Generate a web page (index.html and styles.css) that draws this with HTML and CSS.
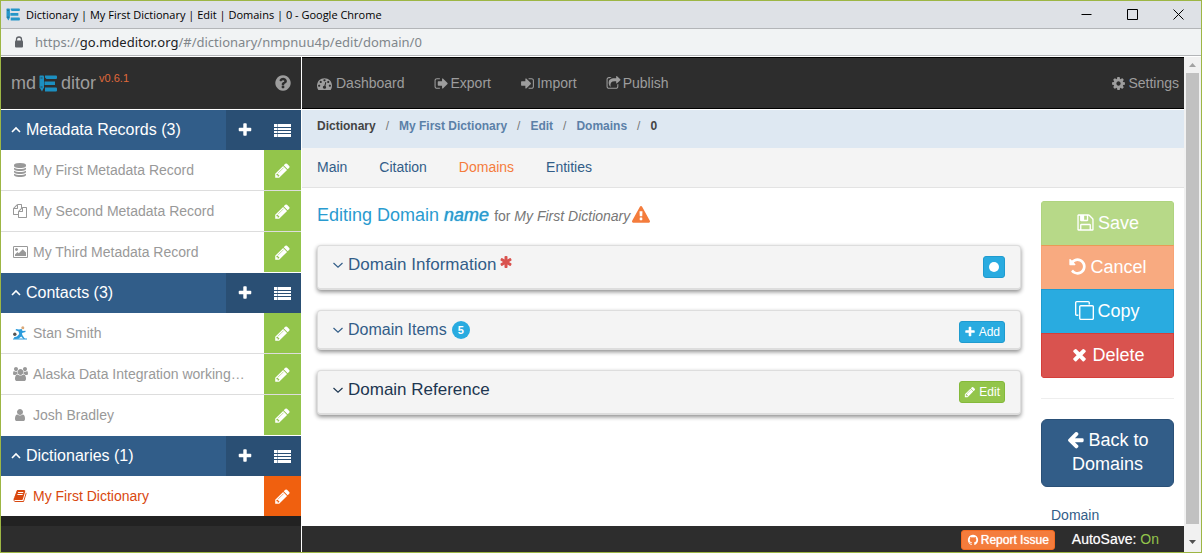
FILE: index.html
```html
<!DOCTYPE html>
<html lang="en">
<head>
<meta charset="utf-8">
<title>Dictionary | My First Dictionary | Edit | Domains | 0</title>
<link rel="stylesheet" href="styles.css">
</head>
<body>
<svg class="sprite" aria-hidden="true">
  <symbol id="plus" viewBox="0 0 1792 1792"><path d="M1600 736v192q0 40-28 68t-68 28h-416v416q0 40-28 68t-68 28h-192q-40 0-68-28t-28-68v-416h-416q-40 0-68-28t-28-68v-192q0-40 28-68t68-28h416v-416q0-40 28-68t68-28h192q40 0 68 28t28 68v416h416q40 0 68 28t28 68z"/></symbol>
  <symbol id="pencil" viewBox="0 0 1792 1792"><path d="M491 1536l91-91-235-235-91 91v107h128v128h107zm523-928q0-22-22-22-10 0-17 7l-542 542q-7 7-7 17 0 22 22 22 10 0 17-7l542-542q7-7 7-17zm-54-192l416 416-832 832h-416v-416zm683 96q0 53-37 90l-166 166-416-416 166-165q36-38 90-38 53 0 91 38l235 234q37 39 37 91z"/></symbol>
  <symbol id="database" viewBox="0 0 1792 1792"><path d="M896 768q237 0 443-43t325-127v170q0 69-103 128t-280 93.500-385 34.500-385-34.500-280-93.500-103-128v-170q119 84 325 127t443 43zm0 768q237 0 443-43t325-127v170q0 69-103 128t-280 93.500-385 34.500-385-34.500-280-93.500-103-128v-170q119 84 325 127t443 43zm0-384q237 0 443-43t325-127v170q0 69-103 128t-280 93.500-385 34.500-385-34.500-280-93.500-103-128v-170q119 84 325 127t443 43zm0-1152q208 0 385 34.500t280 93.500 103 128v128q0 69-103 128t-280 93.500-385 34.500-385-34.500-280-93.500-103-128v-128q0-69 103-128t280-93.500 385-34.500z"/></symbol>
  <symbol id="files" viewBox="0 0 1792 1792"><path d="M1696 384q40 0 68 28t28 68v1216q0 40-28 68t-68 28h-960q-40 0-68-28t-28-68v-288h-544q-40 0-68-28t-28-68v-672q0-40 20-88t48-76l408-408q28-28 76-48t88-20h416q40 0 68 28t28 68v328q68-40 128-40h416zm-544 213l-299 299h299v-299zm-640-384l-299 299h299v-299zm196 647l316-316v-416h-384v416q0 40-28 68t-68 28h-416v640h512v-256q0-40 20-88t48-76zm956 804v-1152h-384v416q0 40-28 68t-68 28h-416v640h896z"/></symbol>
  <symbol id="picture" viewBox="-64 0 1920 1792"><path d="M576 576q0 80-56 136t-136 56-136-56-56-136 56-136 136-56 136 56 56 136zm1024 384v448h-1408v-192l320-320 160 160 512-512zm96-704h-1600q-13 0-22.500 9.500t-9.500 22.500v1216q0 13 9.500 22.500t22.500 9.500h1600q13 0 22.500-9.500t9.500-22.500v-1216q0-13-9.500-22.500t-22.500-9.500zm160 32v1216q0 66-47 113t-113 47h-1600q-66 0-113-47t-47-113v-1216q0-66 47-113t113-47h1600q66 0 113 47t47 113z"/></symbol>
  <symbol id="question" viewBox="0 0 1792 1792"><path d="M1024 1376v-192q0-14-9-23t-23-9h-192q-14 0-23 9t-9 23v192q0 14 9 23t23 9h192q14 0 23-9t9-23zm256-672q0-88-55.500-163t-138.500-116-170-41q-243 0-371 213-15 24 8 42l132 100q7 6 19 6 16 0 25-12 53-68 86-92 34-24 86-24 48 0 85.500 26t37.500 59q0 38-20 61t-68 45q-63 28-115.500 86.500t-52.500 125.500v36q0 14 9 23t23 9h192q14 0 23-9t9-23q0-19 21.500-49.500t54.500-49.500q32-18 49-28.500t46-35 44.500-48 28-60.500 12.500-81zm384 192q0 209-103 385.500t-279.500 279.500-385.500 103-385.500-103-279.500-279.500-103-385.500 103-385.500 279.500-279.500 385.500-103 385.500 103 279.500 279.500 103 385.500z"/></symbol>
  <symbol id="user" viewBox="0 0 1792 1792"><path d="M1536 1399q0 109-62.500 187t-150.500 78h-854q-88 0-150.500-78t-62.500-187q0-85 8.500-160.500t31.500-152 58.500-131 94-89 134.500-34.500q131 128 313 128t313-128q76 0 134.500 34.500t94 89 58.500 131 31.500 152 8.500 160.500zm-256-887q0 159-112.500 271.500t-271.500 112.500-271.500-112.500-112.500-271.500 112.500-271.500 271.500-112.500 271.500 112.500 112.500 271.500z"/></symbol>
  <symbol id="users" viewBox="0 0 1920 1792"><path d="M593 896q-162 5-265 128h-134q-82 0-138-40.500t-56-118.500q0-353 124-353 6 0 43.500 21t97.500 42.500 119 21.500q67 0 133-23-5 37-5 66 0 159 81 256zm1071 637q0 120-73 189.500t-194 69.500h-874q-121 0-194-69.500t-73-189.500q0-53 3.500-103.500t14-109 26.500-108.500 43-97.500 62-81 85.500-53.500 111.500-20q10 0 43 21.500t73 48 107 48 135 21.500 135-21.500 107-48 73-48 43-21.500q61 0 111.500 20t85.500 53.500 62 81 43 97.500 26.500 108.500 14 109 3.500 103.500zm-1024-1277q0 106-75 181t-181 75-181-75-75-181 75-181 181-75 181 75 75 181zm704 384q0 159-112.500 271.500t-271.500 112.500-271.500-112.500-112.500-271.500 112.500-271.500 271.500-112.500 271.500 112.500 112.500 271.500zm576 225q0 78-56 118.500t-138 40.500h-134q-103-123-265-128 81-97 81-256 0-29-5-66 66 23 133 23 59 0 119-21.500t97.500-42.500 43.500-21q124 0 124 353zm-128-609q0 106-75 181t-181 75-181-75-75-181 75-181 181-75 181 75 75 181z"/></symbol>
  <symbol id="gauge" viewBox="0 0 1792 1792"><path d="M384 1152q0-53-37.500-90.500t-90.500-37.500-90.500 37.500-37.500 90.500 37.500 90.500 90.500 37.500 90.500-37.500 37.500-90.500zm192-448q0-53-37.500-90.500t-90.500-37.500-90.500 37.500-37.500 90.500 37.500 90.500 90.500 37.500 90.500-37.500 37.500-90.500zm428 481l101-382q6-26-7.500-48.500t-38.500-29.500-48 6.500-30 39.500l-101 382q-60 5-107 43.500t-63 98.500q-20 77 20 146t117 89 146-20 89-117q16-60-6-117t-72-91zm660-33q0-53-37.500-90.500t-90.500-37.500-90.500 37.500-37.500 90.500 37.500 90.500 90.500 37.500 90.500-37.500 37.500-90.500zm-640-640q0-53-37.500-90.500t-90.500-37.500-90.500 37.500-37.500 90.500 37.500 90.500 90.500 37.500 90.500-37.500 37.500-90.500zm448 192q0-53-37.500-90.500t-90.500-37.500-90.500 37.500-37.500 90.500 37.500 90.500 90.500 37.500 90.500-37.500 37.500-90.500zm320 448q0 261-141 483-19 29-54 29h-1402q-35 0-54-29-141-221-141-483 0-182 71-348t191-286 286-191 348-71 348 71 286 191 191 286 71 348z"/></symbol>
  <symbol id="sign-out" viewBox="0 0 1792 1792"><path d="M704 1440q0 4 1 20t.5 26.500-3 23.500-10 19.500-20.500 6.500h-320q-119 0-203.500-84.500t-84.500-203.500v-704q0-119 84.500-203.500t203.500-84.500h320q13 0 22.500 9.500t9.500 22.500q0 4 1 20t.5 26.500-3 23.500-10 19.500-20.500 6.500h-320q-66 0-113 47t-47 113v704q0 66 47 113t113 47h312l11.500 1 11.500 3 8 5.500 7 9 2 13.500zm928-544q0 26-19 45l-544 544q-19 19-45 19t-45-19-19-45v-288h-448q-26 0-45-19t-19-45v-384q0-26 19-45t45-19h448v-288q0-26 19-45t45-19 45 19l544 544q19 19 19 45z"/></symbol>
  <symbol id="sign-in" viewBox="0 0 1792 1792"><path d="M1312 896q0 26-19 45l-544 544q-19 19-45 19t-45-19-19-45v-288h-448q-26 0-45-19t-19-45v-384q0-26 19-45t45-19h448v-288q0-26 19-45t45-19 45 19l544 544q19 19 19 45zm352-352v704q0 119-84.500 203.500t-203.500 84.500h-320q-13 0-22.500-9.500t-9.500-22.500q0-4-1-20t-.5-26.500 3-23.500 10-19.500 20.500-6.500h320q66 0 113-47t47-113v-704q0-66-47-113t-113-47h-312l-11.500-1-11.500-3-8-5.500-7-9-2-13.500q0-4-1-20t-.5-26.500 3-23.500 10-19.500 20.500-6.500h320q119 0 203.500 84.500t84.500 203.500z"/></symbol>
  <symbol id="share" viewBox="0 0 1792 1792"><path d="M1472 989v259q0 119-84.500 203.500t-203.500 84.500h-832q-119 0-203.500-84.500t-84.500-203.500v-832q0-119 84.500-203.500t203.500-84.500h255q13 0 22.500 9.500t9.500 22.500q0 27-26 32-77 26-133 60-10 4-16 4h-112q-66 0-113 47t-47 113v832q0 66 47 113t113 47h832q66 0 113-47t47-113v-214q0-19 18-29 28-13 54-37 16-16 35-8 21 9 21 29zm237-496l-384 384q-18 19-45 19-12 0-25-5-39-17-39-59v-192h-160q-323 0-438 131-119 137-74 473 3 23-20 34-8 2-12 2-16 0-26-13-10-14-21-31t-39.500-68.500-49.500-99.500-38.500-114-17.500-122q0-49 3.500-91t14-90 28-88 47-81.500 68.500-74 94.500-61.500 124.500-48.500 159.500-30.500 196.500-11h160v-192q0-42 39-59 13-5 25-5 26 0 45 19l384 384q19 19 19 45t-19 45z"/></symbol>
  <symbol id="cog" viewBox="0 0 1792 1792"><path d="M1152 896q0-106-75-181t-181-75-181 75-75 181 75 181 181 75 181-75 75-181zm512-109v222q0 12-8 23t-20 13l-185 28q-19 54-39 91 35 50 107 138 10 12 10 25t-9 23q-27 37-99 108t-94 71q-12 0-26-9l-138-108q-44 23-91 38-16 136-29 186-7 28-36 28h-222q-14 0-24.500-8.500t-11.500-21.500l-28-184q-49-16-90-37l-141 107q-10 9-25 9-14 0-25-11-126-114-165-168-7-10-7-23 0-12 8-23 15-21 51-66.500t54-70.500q-27-50-41-99l-183-27q-13-2-21-12.500t-8-23.500v-222q0-12 8-23t19-13l186-28q14-46 39-92-40-57-107-138-10-12-10-24 0-10 9-23 26-36 98.500-107.500t94.500-71.500q13 0 26 10l138 107q44-23 91-38 16-136 29-186 7-28 36-28h222q14 0 24.500 8.500t11.500 21.500l28 184q49 16 90 37l142-107q9-9 24-9 13 0 25 10 129 119 165 170 7 8 7 22 0 12-8 23-15 21-51 66.500t-54 70.500q26 50 41 98l183 28q13 2 21 12.500t8 23.500z"/></symbol>
  <symbol id="asterisk" viewBox="0 0 1792 1792"><path d="M1546 1050q46 26 59.500 77.500t-12.500 97.500l-64 110q-26 46-77.500 59.500t-97.500-12.500l-266-153v307q0 52-38 90t-90 38h-128q-52 0-90-38t-38-90v-307l-266 153q-46 26-97.500 12.500t-77.500-59.500l-64-110q-26-46-12.500-97.500t59.500-77.500l266-154-266-154q-46-26-59.500-77.500t12.500-97.500l64-110q26-46 77.500-59.500t97.500 12.500l266 153v-307q0-52 38-90t90-38h128q52 0 90 38t38 90v307l266-153q46-26 97.500-12.500t77.500 59.500l64 110q26 46 12.500 97.500t-59.500 77.500l-266 154z"/></symbol>
  <symbol id="warning" viewBox="0 0 1792 1792"><path d="M1024 1375v-190q0-14-9.500-23.500t-22.500-9.500h-192q-13 0-22.500 9.500t-9.500 23.500v190q0 14 9.500 23.500t22.500 9.500h192q13 0 22.500-9.500t9.500-23.500zm-2-374l18-459q0-12-10-19-13-11-24-11h-220q-11 0-24 11-10 7-10 21l17 457q0 10 10 16.500t24 6.500h185q14 0 23.500-6.500t10.500-16.500zm-14-934l768 1408q35 63-2 126-17 29-46.500 46t-63.500 17h-1536q-34 0-63.500-17t-46.500-46q-37-63-2-126l768-1408q17-31 47-49t65-18 65 18 47 49z"/></symbol>
  <symbol id="floppy" viewBox="0 0 1792 1792"><path d="M512 1536h768v-384h-768v384zm896 0h128v-896q0-14-10-38.500t-20-34.500l-281-281q-10-10-34-20t-39-10v416q0 40-28 68t-68 28h-576q-40 0-68-28t-28-68v-416h-128v1280h128v-416q0-40 28-68t68-28h832q40 0 68 28t28 68v416zm-384-928v-320q0-13-9.500-22.500t-22.500-9.500h-192q-13 0-22.500 9.500t-9.500 22.500v320q0 13 9.500 22.500t22.500 9.500h192q13 0 22.500-9.500t9.500-22.500zm640 32v928q0 40-28 68t-68 28h-1344q-40 0-68-28t-28-68v-1344q0-40 28-68t68-28h928q40 0 88 20t76 48l280 280q28 28 48 76t20 88z"/></symbol>
  <symbol id="undo" viewBox="0 0 1792 1792"><path d="M1664 896q0 156-61 298t-164 245-245 164-298 61q-172 0-327-72.500t-264-204.500q-7-10-6.500-22.500t8.500-20.500l137-138q10-9 25-9 16 2 23 12 73 95 179 147t225 52q104 0 198.500-40.500t163.500-109.500 109.500-163.500 40.500-198.500-40.500-198.500-109.500-163.500-163.500-109.500-198.500-40.500q-98 0-188 35.500t-160 101.500l137 138q31 30 14 69-17 40-59 40h-448q-26 0-45-19t-19-45v-448q0-42 40-59 39-17 69 14l130 129q107-101 244.500-156.500t284.500-55.500q156 0 298 61t245 164 164 245 61 298z"/></symbol>
  <symbol id="clone" viewBox="0 0 1792 1792"><path d="M1664 1632v-1088q0-13-9.500-22.500t-22.500-9.500h-1088q-13 0-22.500 9.500t-9.500 22.500v1088q0 13 9.500 22.500t22.500 9.500h1088q13 0 22.500-9.500t9.500-22.500zm128-1088v1088q0 66-47 113t-113 47h-1088q-66 0-113-47t-47-113v-1088q0-66 47-113t113-47h1088q66 0 113 47t47 113zm-384-384v160h-128v-160q0-13-9.500-22.500t-22.500-9.500h-1088q-13 0-22.500 9.500t-9.500 22.500v1088q0 13 9.500 22.500t22.500 9.500h160v128h-160q-66 0-113-47t-47-113v-1088q0-66 47-113t113-47h1088q66 0 113 47t47 113z"/></symbol>
  <symbol id="times" viewBox="0 0 1792 1792"><path d="M1490 1322q0 40-28 68l-136 136q-28 28-68 28t-68-28l-294-294-294 294q-28 28-68 28t-68-28l-136-136q-28-28-28-68t28-68l294-294-294-294q-28-28-28-68t28-68l136-136q28-28 68-28t68 28l294 294 294-294q28-28 68-28t68 28l136 136q28 28 28 68t-28 68l-294 294 294 294q28 28 28 68z"/></symbol>
  <symbol id="arrow-left" viewBox="0 0 1792 1792"><path d="M1664 896v128q0 53-32.500 90.500t-84.500 37.500h-704l293 294q38 36 38 90t-38 90l-75 76q-37 37-90 37-52 0-91-37l-651-652q-37-37-37-90 0-52 37-91l651-650q38-38 91-38 52 0 90 38l75 74q38 38 38 91t-38 91l-293 293h704q52 0 84.500 37.500t32.500 90.500z"/></symbol>
  <symbol id="github" viewBox="0 0 1792 1792"><path d="M896 128q209 0 385.500 103t279.500 279.500 103 385.500q0 251-146.500 451.500t-378.500 277.500q-27 5-40-7t-13-30q0-3 .5-76.500t.5-134.500q0-97-52-142 57-6 102.500-18t94-39 81-66.500 53-105 20.500-150.500q0-119-79-206 37-91-8-204-28-9-81 11t-92 44l-38 24q-93-26-192-26t-192 26q-16-11-42.500-27t-83.500-38.500-85-13.500q-45 113-8 204-79 87-79 206 0 85 20.500 150t52.500 105 80.500 67 94 39 102.500 18q-39 36-49 103-21 10-45 15t-57 5-65.500-21.500-55.500-62.500q-19-32-48.500-52t-49.500-24l-20-3q-21 0-29 4.500t-5 11.500 9 14 13 12l7 5q22 10 43.500 38t31.500 51l10 23q13 38 44 61.500t67 30 69.500 7 55.500-3.500l23-4q0 38 .5 88.500t.5 54.500q0 18-13 30t-40 7q-232-77-378.500-277.500t-146.500-451.500q0-209 103-385.500t279.500-279.500 385.500-103z"/></symbol>
  <symbol id="book" viewBox="0 0 1792 1792"><path d="M1703 478q40 57 18 129l-275 906q-19 64-76.500 107.500t-122.500 43.500h-923q-77 0-148.500-53.500t-99.500-131.500q-24-67-2-127 0-4 3-27t4-37q1-8-3-21.500t-3-19.500q2-11 8-21t16.500-23.500 16.500-23.500q23-38 45-91.500t30-91.500q3-10 .5-30t-.5-28q3-11 17-28t17-23q21-36 42-92t25-90q1-9-2.500-32t.5-28q4-13 22-30.500t22-22.500q19-26 42.500-84.500t27.500-96.500q1-8-3-25.500t-2-26.500q2-8 9-18t18-23 17-21q8-12 16.500-30.500t15-35 16-36 19.500-32 26.500-23.500 36-11.500 47.500 5.500l-1 3q38-9 51-9h761q74 0 114 56t18 130l-274 906q-36 119-71.500 153.500t-128.500 34.500h-869q-27 0-38 15-11 16-1 43 24 70 144 70h923q29 0 56-15.500t35-41.500l300-987q7-22 5-57 38 15 59 43zm-1064 2q-4 13 2 22.500t20 9.500h608q13 0 25.500-9.500t16.500-22.500l21-64q4-13-2-22.500t-20-9.500h-608q-13 0-25.500 9.500t-16.500 22.500zm-83 256q-4 13 2 22.500t20 9.500h608q13 0 25.500-9.500t16.500-22.500l21-64q4-13-2-22.500t-20-9.500h-608q-13 0-25.500 9.500t-16.500 22.500z"/></symbol>
  <symbol id="list" viewBox="0 0 17 13"><path d="M0 0h3v3H0zM3.500 0H17v3H3.500zM0 4h3v2H0zM3.500 4H17v2H3.500zM0 7h3v2H0zM3.500 7H17v2H3.500zM0 10h3v3H0zM3.500 10H17v3H3.500z"/></symbol>
  <symbol id="chevron-up" viewBox="0 0 10 10"><path d="M1 7l4-4 4 4" fill="none" stroke="currentColor" stroke-width="1.600"/></symbol>
  <symbol id="chevron-down" viewBox="0 0 10 10"><path d="M0.500 3l4.500 4.200 4.500-4.200" fill="none" stroke="currentColor" stroke-width="1.200"/></symbol>
  <symbol id="logo" viewBox="0 0 18 17"><path d="M1 .5h3q1 0 1 1v11l-2 4-2.500-4V1.500q0-1 .5-1z"/><path d="M6 .5h11q1 0 1 1v1.500q0 1-1 1H7.500L6 2.500zM5.500 6.500h10.500v3.500H5.500zM6 12.500h11q1 0 1 1v2q0 1-1 1H6z"/><path d="M1.500 3h2M1.500 12h2" stroke="#2d2d2d" stroke-width=".7"/></symbol>
  <symbol id="runner" viewBox="0 0 14 14"><path d="M6 3.500L3 3l-.4 1.300 3 1.300.6 2.400-2.200 2.500-3 .8.200 1.700 4.200-.2 2.800-2.300 2.300 2.500h1.500l-2.700-4-.3-2 3.500-.9V4.800L9.500 5 8.700 3z" fill="#2a9bdc"/><path d="M0 12.500h14v1H0z" fill="#2a9bdc"/><circle cx="9.800" cy="1.800" r="1.500" fill="#d9a878"/><circle cx="1.800" cy="8.300" r="1.700" fill="#555"/></symbol>
</svg>

<div class="window">
  <header class="titlebar">
    <svg class="favicon"><use href="#logo"/></svg>
    <span class="titlebar-text">Dictionary | My First Dictionary | Edit | Domains | 0 - Google Chrome</span>
    <div class="window-controls">
      <button type="button" aria-label="Minimize"><svg viewBox="0 0 11 11"><path d="M.5 5.500h10"/></svg></button>
      <button type="button" aria-label="Maximize"><svg viewBox="0 0 11 11"><path d="M.5.500h10v10H.5z"/></svg></button>
      <button type="button" aria-label="Close"><svg viewBox="0 0 11 11"><path d="M.5.500l10 10M10.500.500l-10 10"/></svg></button>
    </div>
  </header>
  <div class="addressbar">
    <svg class="lock" viewBox="0 0 10 12"><path d="M2.500 5V3.500a2.500 2.500 0 0 1 5 0V5" fill="none" stroke="#5f6368" stroke-width="1.300"/><rect x="1" y="4.500" width="8" height="7" rx="1" fill="#5f6368"/></svg>
    <span>https://<b>go.mdeditor.org</b>/#/dictionary/nmpnuu4p/edit/domain/0</span>
  </div>

  <div class="app">
    <aside class="sidebar">
      <div class="brand">
        <span>md</span><svg class="brand-logo"><use href="#logo"/></svg><span>ditor</span><sup>v0.6.1</sup>
        <button type="button" class="help" aria-label="Help"><svg><use href="#question"/></svg></button>
      </div>
      <section>
        <div class="group-head">
          <h2><svg><use href="#chevron-up"/></svg>Metadata Records (3)</h2>
          <button type="button" aria-label="Add record"><svg><use href="#plus"/></svg></button>
          <button type="button" aria-label="List records"><svg><use href="#list"/></svg></button>
        </div>
        <ul>
          <li><a href="#"><svg><use href="#database"/></svg><span>My First Metadata Record</span></a><button type="button" aria-label="Edit"><svg><use href="#pencil"/></svg></button></li>
          <li><a href="#"><svg><use href="#files"/></svg><span>My Second Metadata Record</span></a><button type="button" aria-label="Edit"><svg><use href="#pencil"/></svg></button></li>
          <li><a href="#"><svg class="wide"><use href="#picture"/></svg><span>My Third Metadata Record</span></a><button type="button" aria-label="Edit"><svg><use href="#pencil"/></svg></button></li>
        </ul>
      </section>
      <section>
        <div class="group-head">
          <h2><svg><use href="#chevron-up"/></svg>Contacts (3)</h2>
          <button type="button" aria-label="Add contact"><svg><use href="#plus"/></svg></button>
          <button type="button" aria-label="List contacts"><svg><use href="#list"/></svg></button>
        </div>
        <ul>
          <li><a href="#"><svg><use href="#runner"/></svg><span>Stan Smith</span></a><button type="button" aria-label="Edit"><svg><use href="#pencil"/></svg></button></li>
          <li><a href="#"><svg class="wide"><use href="#users"/></svg><span>Alaska Data Integration working…</span></a><button type="button" aria-label="Edit"><svg><use href="#pencil"/></svg></button></li>
          <li><a href="#"><svg><use href="#user"/></svg><span>Josh Bradley</span></a><button type="button" aria-label="Edit"><svg><use href="#pencil"/></svg></button></li>
        </ul>
      </section>
      <section>
        <div class="group-head">
          <h2><svg><use href="#chevron-up"/></svg>Dictionaries (1)</h2>
          <button type="button" aria-label="Add dictionary"><svg><use href="#plus"/></svg></button>
          <button type="button" aria-label="List dictionaries"><svg><use href="#list"/></svg></button>
        </div>
        <ul>
          <li class="active"><a href="#"><svg><use href="#book"/></svg><span>My First Dictionary</span></a><button type="button" aria-label="Edit"><svg><use href="#pencil"/></svg></button></li>
        </ul>
      </section>
      <div class="sidebar-foot"></div>
    </aside>

    <div class="page">
      <nav class="navbar">
        <a href="#" class="dashboard"><svg><use href="#gauge"/></svg>Dashboard</a>
        <a href="#"><svg><use href="#sign-out"/></svg>Export</a>
        <a href="#"><svg><use href="#sign-in"/></svg>Import</a>
        <a href="#"><svg><use href="#share"/></svg>Publish</a>
        <a href="#" class="settings"><svg><use href="#cog"/></svg>Settings</a>
      </nav>
      <nav aria-label="Breadcrumb">
        <ol class="breadcrumb">
          <li>Dictionary</li>
          <li><a href="#">My First Dictionary</a></li>
          <li><a href="#">Edit</a></li>
          <li><a href="#">Domains</a></li>
          <li>0</li>
        </ol>
      </nav>
      <nav class="tabs">
        <a href="#">Main</a>
        <a href="#">Citation</a>
        <a href="#" class="current">Domains</a>
        <a href="#">Entities</a>
      </nav>
      <div class="content">
        <main>
          <h1>Editing Domain <em>name</em> <small>for <i>My First Dictionary</i></small><svg><use href="#warning"/></svg></h1>
          <section class="panel">
            <h3><svg class="chev"><use href="#chevron-down"/></svg>Domain Information<svg class="required"><use href="#asterisk"/></svg></h3>
            <button type="button" class="btn-sm info dot" aria-label="Status"><span></span></button>
          </section>
          <section class="panel short">
            <h3><svg class="chev"><use href="#chevron-down"/></svg>Domain Items<span class="badge">5</span></h3>
            <button type="button" class="btn-sm info"><svg><use href="#plus"/></svg>Add</button>
          </section>
          <section class="panel reference">
            <h3><svg class="chev"><use href="#chevron-down"/></svg>Domain Reference</h3>
            <button type="button" class="btn-sm success"><svg><use href="#pencil"/></svg>Edit</button>
          </section>
        </main>
        <aside class="actions">
          <div class="btn-stack">
            <button type="button" class="save"><svg><use href="#floppy"/></svg>Save</button>
            <button type="button" class="cancel"><svg><use href="#undo"/></svg>Cancel</button>
            <button type="button" class="copy"><svg><use href="#clone"/></svg>Copy</button>
            <button type="button" class="delete"><svg><use href="#times"/></svg>Delete</button>
          </div>
          <hr>
          <button type="button" class="back"><svg><use href="#arrow-left"/></svg> Back to Domains</button>
          <a href="#" class="jump">Domain</a>
        </aside>
      </div>
      <footer class="footer">
        <button type="button" class="report"><svg><use href="#github"/></svg>Report Issue</button>
        <span class="autosave">AutoSave: <span>On</span></span>
      </footer>
    </div>

    <div class="scrollbar" aria-hidden="true">
      <svg viewBox="0 0 7 4"><path d="M0 4l3.500-4L7 4z" fill="#a3a3a3"/></svg>
      <div class="thumb"></div>
      <svg viewBox="0 0 7 4"><path d="M0 0h7L3.500 4z" fill="#505050"/></svg>
    </div>
  </div>
</div>
</body>
</html>
```

FILE: styles.css
```css
* { box-sizing: border-box; }

body {
  margin: 0;
  font: 14px/20px "Liberation Sans", Arial, sans-serif;
  color: #333;
}

button { font: inherit; color: inherit; border: 0; padding: 0; background: none; cursor: pointer; }
a { color: inherit; text-decoration: none; }
ul, ol { list-style: none; margin: 0; padding: 0; }
h1, h2, h3 { margin: 0; font-weight: 400; }
svg { fill: currentColor; flex: none; }
.sprite { display: none; }

.window {
  display: flex;
  flex-direction: column;
  height: 100vh;
  border: 1px solid #9db644;
  overflow: hidden;
  background: #fff;
}

/* Browser chrome */
.titlebar {
  display: flex;
  align-items: center;
  height: 28px;
  padding-left: 5px;
  background: #dee1e6;
  border-bottom: 1px solid #b3b5b8;
  font: 11px/16px "Open Sans", sans-serif;
  color: #000;
}
.favicon { width: 14px; height: 13px; margin-right: 6px; color: #2596c8; }
.window-controls { display: flex; margin-left: auto; }
.window-controls button { display: grid; place-items: center; width: 46px; height: 27px; }
.window-controls svg { width: 11px; height: 11px; fill: none; stroke: #000; }
.addressbar {
  display: flex;
  align-items: center;
  height: 27px;
  padding-left: 13px;
  background: #f1f3f4;
  border-bottom: 1px solid #b3b5b8;
  font: 13px/20px "Noto Sans", sans-serif;
  color: #80868b;
}
.addressbar b { font-weight: 400; color: #202124; }
.lock { width: 10px; height: 12px; margin-right: 11px; }

.app { display: flex; flex: 1; min-height: 0; padding-top: 1px; }

/* Sidebar */
.sidebar {
  display: flex;
  flex-direction: column;
  width: 301px;
  border-right: 1px solid #fff;
  background: #222;
}
.brand {
  display: flex;
  align-items: center;
  height: 53px;
  padding: 0 9px 0 10px;
  background: #2d2d2d;
  border-bottom: 1px solid #fff;
  font-size: 18px;
  color: #9d9d9d;
}
.brand-logo { width: 18px; height: 17px; margin: 0 4px 0 3px; color: #1c8fc0; }
.brand sup { align-self: flex-start; margin: 11px 0 0 3px; font-size: 11px; color: #e0693a; }
.help { display: flex; margin-left: auto; }
.help svg { width: 18px; height: 18px; }

.group-head { display: flex; height: 40px; background: #315d89; color: #fff; }
.group-head h2 { display: flex; align-items: center; flex: 1; padding-left: 10px; font-size: 16px; }
.group-head h2 svg { width: 10px; height: 10px; margin-right: 5px; }
.group-head button { display: grid; place-items: center; width: 38px; background: #2a4f74; }
.group-head button + button { width: 37px; }
.group-head button svg { width: 16px; height: 16px; }
.group-head button + button svg { width: 17px; height: 13px; }

.sidebar li { display: flex; height: 41px; background: #fff; border-bottom: 1px solid #ddd; color: #999; }
.sidebar li:last-child { border-color: #fff; }
.sidebar li a { display: flex; align-items: center; flex: 1; gap: 6px; padding-left: 12px; min-width: 0; white-space: nowrap; }
.sidebar li a svg { width: 14px; height: 14px; }
.sidebar li a .wide { width: 15px; margin-right: -1px; }
.sidebar li button { display: grid; place-items: center; width: 37px; background: #93c54b; color: #fff; }
.sidebar li button svg { width: 17px; height: 17px; }
.sidebar li.active { height: 40px; border: 0; color: #d9480f; }
.sidebar li.active button { background: #f0600f; }
.sidebar-foot { margin-top: auto; height: 26px; background: #2d2d2d; }

/* Page */
.page { display: flex; flex-direction: column; flex: 1; min-width: 0; }
.navbar {
  display: flex;
  align-items: center;
  gap: 29px;
  height: 52px;
  flex: none;
  padding: 0 5px 0 15px;
  border: 1px solid #000;
  border-left-width: 0;
  border-right-width: 0;
  background: #2d2d2d;
  color: #9d9d9d;
}
.navbar a { display: flex; align-items: center; gap: 2px; }
.navbar .dashboard { gap: 4px; }
.navbar svg { width: 15px; height: 15px; }
.navbar .settings { margin-left: auto; }

.breadcrumb {
  display: flex;
  height: 38px;
  margin-top: 1px;
  padding: 6px 15px;
  background: #dee8f2;
  font-size: 12px;
  font-weight: 700;
  color: #444;
}
.breadcrumb a { color: #5b80a8; }
.breadcrumb li + li::before { content: "/"; padding: 0 10px; font-weight: 400; color: #777; }

.tabs {
  display: flex;
  gap: 32px;
  height: 40px;
  flex: none;
  padding: 9px 15px;
  background: #f4f4f4;
  border-bottom: 1px solid #e3e3e3;
  color: #325d88;
}
.tabs .current { color: #f47c3c; }

.content { display: flex; gap: 20px; flex: 1; min-height: 0; padding: 13px 10px 0 15px; overflow: hidden; }
main { flex: 1; min-width: 0; }
h1 { height: 28px; margin-bottom: 16px; font-size: 18px; line-height: 28px; color: #2a9bd0; white-space: nowrap; }
h1 em { text-shadow: 0 0 1px #2a9bd0; }
h1 small { font-size: 14px; color: #777; }
h1 svg { width: 18px; height: 18px; margin-left: 2px; vertical-align: -3px; color: #f47c3c; }

.panel {
  display: flex;
  align-items: flex-start;
  justify-content: space-between;
  height: 45px;
  margin-bottom: 20px;
  padding: 9px 15px 0;
  background: #f4f4f4;
  border: 1px solid #ddd;
  border-bottom-width: 2px;
  border-radius: 4px;
  box-shadow: 0 2px 4px rgba(0, 0, 0, .45);
  color: #325d88;
}
.panel.short { height: 40px; }
.panel.short h3 { font-size: 16px; }
.panel.reference { color: #1d3650; }
.panel h3 { display: flex; align-items: center; height: 20px; font-size: 17px; }
.chev { width: 10px; height: 10px; margin-right: 5px; }
.required { align-self: flex-start; width: 14px; height: 14px; margin-left: 3px; color: #d9534f; }
.badge { display: grid; place-items: center; width: 18px; height: 18px; margin-left: 5px; border-radius: 9px; background: #29abe0; color: #fff; font-size: 11px; font-weight: 700; line-height: 18px; }

.btn-sm {
  display: flex;
  align-items: center;
  justify-content: center;
  gap: 3px;
  height: 22px;
  margin-top: 1px;
  padding: 0 4px;
  border: 1px solid;
  border-radius: 3px;
  color: #fff;
  font-size: 12px;
}
.btn-sm svg { width: 12px; height: 12px; }
.info { background: #29abe0; border-color: #1f9bcf; }
.success { background: #93c54b; border-color: #84b93a; }
.dot { width: 22px; }
.dot span { width: 10px; height: 10px; flex: none; border-radius: 50%; background: #fff; }

.actions { width: 133px; flex: none; color: #fff; }
.btn-stack { display: flex; flex-direction: column; border-radius: 4px; overflow: hidden; }
.btn-stack button, .back { font-size: 18px; line-height: 24px; }
.btn-stack button { display: flex; align-items: center; justify-content: center; gap: 3px; height: 44px; padding-bottom: 2px; border: 1px solid; border-bottom: 0; }
.btn-stack svg, .back svg { width: 19px; height: 19px; }
.btn-stack .save { background: #b7d988; border-color: #afd47f; }
.btn-stack .cancel { background: #f8aa80; border-color: #e99b55 #f8a375; }
.btn-stack .copy { background: #29abe0; border-color: #1f9bcf; }
.btn-stack .delete { height: 45px; border-bottom: 1px solid; background: #d9534f; border-color: #d43f3a; }
.actions hr { margin: 20px 0; border: 0; border-top: 1px solid #eee; }
.back { display: block; width: 100%; padding: 8px 16px 10px; border: 1px solid #2a5077; border-radius: 6px; background: #325d88; }
.back svg { margin-right: -2px; vertical-align: -3px; }
.jump { display: block; margin: 18px 0 0 10px; color: #325d88; }

.footer {
  display: flex;
  align-items: center;
  justify-content: flex-end;
  gap: 17px;
  height: 26px;
  flex: none;
  padding-right: 25px;
  background: #2d2d2d;
  color: #fff;
}
.report {
  display: flex;
  align-items: center;
  gap: 2px;
  height: 20px;
  margin-top: 2px;
  padding: 0 5px;
  border: 1px solid #f36a21;
  border-radius: 3px;
  background: #f47c3c;
  font-size: 12px;
  text-shadow: 0 0 1px #fff;
}
.report svg { width: 12px; height: 12px; }
.autosave { text-shadow: 0 0 1px rgba(255, 255, 255, .5); }
.autosave span { color: #93c54b; text-shadow: none; }

.scrollbar {
  display: flex;
  flex-direction: column;
  align-items: center;
  width: 17px;
  padding: 6px 0 8px;
  background: #f1f1f1;
}
.scrollbar svg { width: 7px; height: 4px; }
.thumb { flex: 1; width: 13px; margin: 6px 0 16px; background: #c1c1c1; }
```
